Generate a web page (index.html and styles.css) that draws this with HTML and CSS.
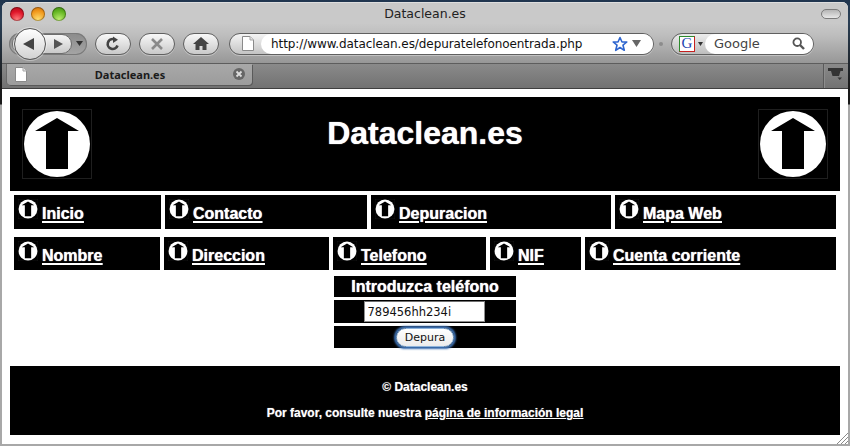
FILE: index.html
```html
<!DOCTYPE html>
<html lang="es">
<head>
<meta charset="utf-8">
<title>Dataclean.es</title>
<link rel="stylesheet" href="styles.css">
</head>
<body>
<svg class="defs" width="0" height="0" aria-hidden="true">
  <symbol id="logo" viewBox="0 0 70 70">
    <rect x="0.5" y="0.5" width="69" height="69" fill="#000" stroke="#1f1f1f"/>
    <circle cx="35" cy="35" r="33" fill="#fff"/>
    <path d="M35 9 L57 22 H46 V60 H24 V22 H13 Z" fill="#000"/>
  </symbol>
  <symbol id="doc" viewBox="0 0 12 15">
    <path d="M.5.5H8L11.5 4V14.500H.5Z" fill="#fff" stroke="#8a8a8a"/>
    <path d="M8 .5V4H11.500" fill="#e4e4e4" stroke="#a5a5a5"/>
  </symbol>
</svg>
<div class="window">
  <header class="titlebar">
    <div class="lights">
      <span class="light red"></span>
      <span class="light orange"></span>
      <span class="light green"></span>
    </div>
    <div class="win-title">Dataclean.es</div>
    <div class="pill-wrap"><span class="pill"></span></div>
  </header>

  <div class="toolbar">
    <div class="nav-group">
      <button class="back" type="button" aria-label="Atrás">
        <svg width="14" height="14" viewBox="0 0 14 14"><path d="M12 1V13L1 7Z" fill="#444"/></svg>
      </button>
      <span class="forward">
        <svg width="11" height="12" viewBox="0 0 11 12"><path d="M1 1V11L10 6Z" fill="#555"/></svg>
      </span>
      <svg class="nav-drop" width="7" height="5" viewBox="0 0 7 5"><path d="M0 0H7L3.500 5Z" fill="#333"/></svg>
    </div>
    <span class="capsule">
      <svg width="16" height="16" viewBox="0 0 16 16"><path d="M12.500 9.500A5 5 0 1 1 9 3.200" fill="none" stroke="#444" stroke-width="2.600"/><path d="M8 .5L13 3.800L8 7Z" fill="#444"/></svg>
    </span>
    <span class="capsule">
      <svg width="14" height="14" viewBox="0 0 14 14"><path d="M2 2L12 12M12 2L2 12" stroke="#8a8a8a" stroke-width="2.600"/></svg>
    </span>
    <span class="capsule">
      <svg width="16" height="14" viewBox="0 0 16 14"><path d="M8 0L16 7H13.500V13H9.500V9H6.500V13H2.500V7H0Z" fill="#444"/></svg>
    </span>
    <div class="urlbar">
      <svg class="url-doc" width="12" height="15"><use href="#doc"/></svg>
      <div class="url-field">
        <span class="url-text">http://www.dataclean.es/depuratelefonoentrada.php</span>
        <svg class="star" width="16" height="16" viewBox="0 0 16 16"><path d="M8 1.500L10 6H14.800L11 9.200L12.300 14.300L8 11.500L3.700 14.300L5 9.200L1.200 6H6Z" fill="#fff" stroke="#2f66cf" stroke-width="1.600" stroke-linejoin="round"/></svg>
        <svg class="url-drop" width="9" height="7" viewBox="0 0 9 7"><path d="M0 0H9L4.500 7Z" fill="#666"/></svg>
      </div>
    </div>
    <span class="sep-dot"></span>
    <div class="searchbar">
      <span class="engine">G</span>
      <svg class="engine-drop" width="5" height="4" viewBox="0 0 5 4"><path d="M0 0H5L2.500 4Z" fill="#333"/></svg>
      <div class="search-field">
        <span class="search-text">Google</span>
        <svg width="13" height="13" viewBox="0 0 13 13"><circle cx="5.200" cy="5.200" r="3.800" fill="none" stroke="#555" stroke-width="1.800"/><path d="M8 8L12 12" stroke="#555" stroke-width="2.400"/></svg>
      </div>
    </div>
  </div>

  <div class="tabstrip">
    <div class="tab">
      <svg class="tab-doc" width="12" height="15"><use href="#doc"/></svg>
      <span class="tab-title">Dataclean.es</span>
      <svg class="tab-close" width="12" height="12" viewBox="0 0 12 12"><circle cx="6" cy="6" r="6" fill="#666"/><path d="M3.500 3.500L8.500 8.500M8.500 3.500L3.500 8.500" stroke="#ddd" stroke-width="1.800"/></svg>
    </div>
    <div class="tab-end">
      <svg width="16" height="12" viewBox="0 0 16 12"><path d="M0 0H15V3H12.500L11 8H4.500L3 3H0Z" fill="#333"/><path d="M9.500 9.500H14L11.750 12Z" fill="#333"/></svg>
    </div>
  </div>

  <main class="page">
    <section class="banner">
      <svg class="logo"><use href="#logo"/></svg>
      <h1>Dataclean.es</h1>
      <svg class="logo"><use href="#logo"/></svg>
    </section>

    <nav class="menu menu-a">
      <div class="cell"><svg class="ico"><use href="#logo"/></svg><a href="#">Inicio</a></div>
      <div class="cell"><svg class="ico"><use href="#logo"/></svg><a href="#">Contacto</a></div>
      <div class="cell"><svg class="ico"><use href="#logo"/></svg><a href="#">Depuracion</a></div>
      <div class="cell"><svg class="ico"><use href="#logo"/></svg><a href="#">Mapa Web</a></div>
    </nav>
    <nav class="menu menu-b">
      <div class="cell"><svg class="ico"><use href="#logo"/></svg><a href="#">Nombre</a></div>
      <div class="cell"><svg class="ico"><use href="#logo"/></svg><a href="#">Direccion</a></div>
      <div class="cell"><svg class="ico"><use href="#logo"/></svg><a href="#">Telefono</a></div>
      <div class="cell"><svg class="ico"><use href="#logo"/></svg><a href="#">NIF</a></div>
      <div class="cell"><svg class="ico"><use href="#logo"/></svg><a href="#">Cuenta corriente</a></div>
    </nav>

    <form class="phone-form">
      <div class="form-row form-head">Introduzca teléfono</div>
      <div class="form-row form-input"><input type="text" value="789456hh234i"></div>
      <div class="form-row form-btn"><button type="button">Depura</button></div>
    </form>

    <footer class="legal">
      <p>© Dataclean.es</p>
      <p>Por favor, consulte nuestra <a href="#">página de información legal</a></p>
    </footer>
  </main>
  <svg class="grip" width="12" height="12" viewBox="0 0 12 12"><path d="M1 12L12 1M5 12L12 5M9 12L12 9" stroke="#8a8a8a" stroke-width="1"/></svg>
</div>
</body>
</html>
```
FILE: styles.css
```css
* { box-sizing: border-box; }
html, body { margin: 0; padding: 0; }
body {
  width: 850px;
  height: 446px;
  overflow: hidden;
  background: linear-gradient(#20354f 0, #2a3f55 20px, #1a1a1a 85px, #1a1a1a 104px, #a8a8a8 105px, #a8a8a8 100%);
  font-family: "Liberation Sans", Arial, sans-serif;
}
.defs { display: block; height: 0; }

.window {
  position: relative;
  margin: 2px 2px 0 2px;
  width: 846px;
  height: 442px;
  border-radius: 6px 6px 0 0;
  overflow: hidden;
  background: #fff;
  font-family: "DejaVu Sans", sans-serif;
}
.grip { position: absolute; right: 0; bottom: 0; }

/* title bar */
.titlebar {
  height: 22px;
  display: grid;
  grid-template-columns: 1fr auto 1fr;
  align-items: center;
  background: #c9c9c9;
  border-top: 1px solid #dedede;
}
.lights { display: flex; gap: 7px; padding: 1px 0 0 8px; }
.light { width: 14px; height: 14px; border-radius: 50%; box-shadow: inset 0 0 0 1px rgba(0,0,0,.3); }
.red { background: radial-gradient(circle at 50% 90%, #ff7d7d 0, #e0162a 55%, #a00a16 100%); }
.orange { background: radial-gradient(circle at 50% 90%, #ffe070 0, #f0961a 60%, #c4670c 100%); }
.green { background: radial-gradient(circle at 50% 90%, #bff070 0, #62b420 60%, #3a8214 100%); }
.win-title { font-size: 12.500px; color: #222; }
.pill-wrap { display: flex; justify-content: flex-end; padding-right: 7px; }
.pill {
  width: 20px; height: 10px; border-radius: 5px;
  border: 1px solid #7b7b7b;
  background: linear-gradient(#b5b5b5, #e8e8e8);
}

/* toolbar */
.toolbar {
  height: 40px;
  display: flex;
  align-items: center;
  padding: 0 0 0 7px;
  background: linear-gradient(#c8c8c8 0, #bdbdbd 30%, #979797 100%);
  border-bottom: 1px solid #5d5d5d;
}
.nav-group {
  position: relative;
  width: 78px;
  height: 22px;
  margin-right: 8px;
  border-radius: 11px;
  background: linear-gradient(#8b8b8b, #a5a5a5);
  box-shadow: inset 0 0 0 1px #7a7a7a;
  display: flex;
  align-items: center;
}
.back {
  position: absolute;
  left: 5px; top: -5px;
  width: 32px; height: 32px;
  padding: 0 2px 0 0;
  border-radius: 50%;
  border: 1px solid #555;
  background: linear-gradient(#fff, #d2d2d2);
  display: flex; align-items: center; justify-content: center;
  box-shadow: 0 0 0 1px rgba(255,255,255,.35);
  z-index: 1;
}
.forward {
  width: 60px; height: 20px;
  margin-left: 3px;
  border-radius: 10px;
  border: 1px solid #6d6d6d;
  background: linear-gradient(#f6f6f6, #c9c9c9);
  display: flex; align-items: center; justify-content: flex-end;
  padding-right: 7px;
}
.nav-drop { margin-left: 4px; }
.capsule {
  width: 36px; height: 22px;
  margin-right: 8px;
  border-radius: 11px;
  border: 1px solid #606060;
  background: linear-gradient(#f8f8f8, #c9c9c9);
  box-shadow: 0 1px 0 rgba(255,255,255,.35);
  display: flex; align-items: center; justify-content: center;
}
.urlbar {
  width: 425px; height: 22px;
  margin-left: 2px;
  border-radius: 11px;
  border: 1px solid #606060;
  background: linear-gradient(#f4f4f4, #c4c4c4);
  box-shadow: 0 1px 0 rgba(255,255,255,.35);
  display: flex; align-items: center;
}
.url-doc { margin-left: 12px; flex: none; }
.url-field {
  flex: 1;
  height: 20px;
  margin-left: 7px;
  border-radius: 10px;
  background: #fff;
  display: flex; align-items: center;
  padding-left: 10px;
}
.url-text { font-size: 12px; letter-spacing: -.08px; color: #111; white-space: nowrap; width: 341px; flex: none; }
.url-drop { margin-left: 4px; }
.sep-dot { width: 4px; height: 4px; margin: 0 8px 0 5px; border-radius: 50%; background: #8c8c8c; }
.searchbar {
  width: 143px; height: 22px;
  border-radius: 11px;
  border: 1px solid #606060;
  background: linear-gradient(#ececec, #bdbdbd);
  box-shadow: 0 1px 0 rgba(255,255,255,.35);
  display: flex; align-items: center;
  padding-left: 7px;
}
.engine {
  width: 16px; height: 16px;
  flex: none;
  border: 1px solid;
  border-color: #2c8a2c #c62020 #c62020 #2c8a2c;
  background: #fff;
  color: #2343b0;
  font: 15px/13px "Liberation Serif", serif;
  text-align: center;
}
.engine-drop { margin-left: 3px; flex: none; }
.search-field {
  flex: 1;
  height: 20px;
  margin-left: 2px;
  border-radius: 10px;
  background: #fff;
  display: flex; align-items: center; justify-content: space-between;
  padding: 0 8px 0 9px;
}
.search-text { font-size: 13px; color: #444; }

/* tab strip */
.tabstrip {
  height: 25px;
  display: flex;
  padding-left: 5px;
  background: linear-gradient(#8a8a8a, #727272);
  border-bottom: 1px solid #3f3f3f;
}
.tab {
  width: 245px; height: 21px;
  display: flex; align-items: center;
  padding: 0 7px 1px 8px;
  border-radius: 0 0 4px 4px;
  background: linear-gradient(#a8a8a8, #9c9c9c);
  box-shadow: 1px 1px 0 #5a5a5a, -1px 0 0 #6b6b6b;
}
.tab-title { flex: 1; text-align: center; font: bold 11px "Noto Sans", sans-serif; color: #1b1b1b; }
.tab-end {
  margin-left: auto;
  width: 25px;
  display: flex; align-items: center; justify-content: center;
  border-left: 1px solid #5a5a5a;
  box-shadow: inset 1px 0 0 #8d8d8d;
  padding-bottom: 4px;
}

/* page */
.page { padding: 8px 8px 0; background: #fff; }
.banner {
  height: 94px;
  background: #000;
  display: flex;
  justify-content: space-between;
  padding: 12px 12px 0;
}
.logo { width: 70px; height: 70px; flex: none; }
.banner h1 {
  margin: 0;
  padding-top: 4px;
  font: bold 32px/40px "Liberation Sans", Arial, sans-serif;
  color: #fff;
  text-shadow: 0 0 1px #fff;
}
.menu {
  display: grid;
  gap: 4px;
  margin: 4px 4px 0;
  font-family: "Liberation Sans", Arial, sans-serif;
}
.menu-a { grid-template-columns: 147px 202px 240px 221px; height: 34px; }
.menu-b { grid-template-columns: 146px 165px 153px 91px 251px; height: 33px; margin-top: 8px; }
.cell { background: #000; display: flex; padding: 4px 0 0 4px; }
.ico { width: 20px; height: 20px; flex: none; margin-right: 4px; }
.cell a {
  margin-top: 6px;
  height: 20px;
  font: bold 16px/18px "Liberation Sans", Arial, sans-serif;
  color: #fff;
  text-decoration: underline;
  text-decoration-thickness: 2px;
  text-underline-offset: 2px;
  text-shadow: 0 0 1px #fff;
}
.phone-form {
  width: 182px;
  margin: 6px auto 0;
  display: flex;
  flex-direction: column;
  gap: 3px;
}
.form-row { background: #000; display: flex; justify-content: center; align-items: center; }
.form-head {
  height: 21px;
  font: bold 16px/21px "Liberation Sans", Arial, sans-serif;
  color: #fff;
  text-shadow: 0 0 1px #fff;
}
.form-input { height: 23px; }
.form-input input {
  width: 121px; height: 21px;
  margin: 0 2px 0 0;
  padding: 1px 3px;
  border: 1px solid #8f8f8f;
  border-top-color: #6f6f6f;
  background: #fff;
  color: #111;
  font: 11.500px "DejaVu Sans", sans-serif;
  outline: none;
}
.form-btn { height: 22px; }
.form-btn button {
  width: 58px; height: 19px;
  padding: 0;
  border-radius: 10px;
  border: 1px solid #8eb4dc;
  background: linear-gradient(#fff, #ececec);
  box-shadow: 0 0 2px 2px #3c6fb0;
  color: #111;
  font: 11px "DejaVu Sans", sans-serif;
}
.legal {
  height: 69px;
  margin-top: 18px;
  padding-top: 14px;
  background: #000;
  color: #fff;
  text-align: center;
  font: bold 12px/14px "Liberation Sans", Arial, sans-serif;
  text-shadow: 0 0 1px rgba(255,255,255,.6);
}
.legal p { margin: 0 0 12px; }
.legal a { color: #fff; text-decoration: underline; }
```
